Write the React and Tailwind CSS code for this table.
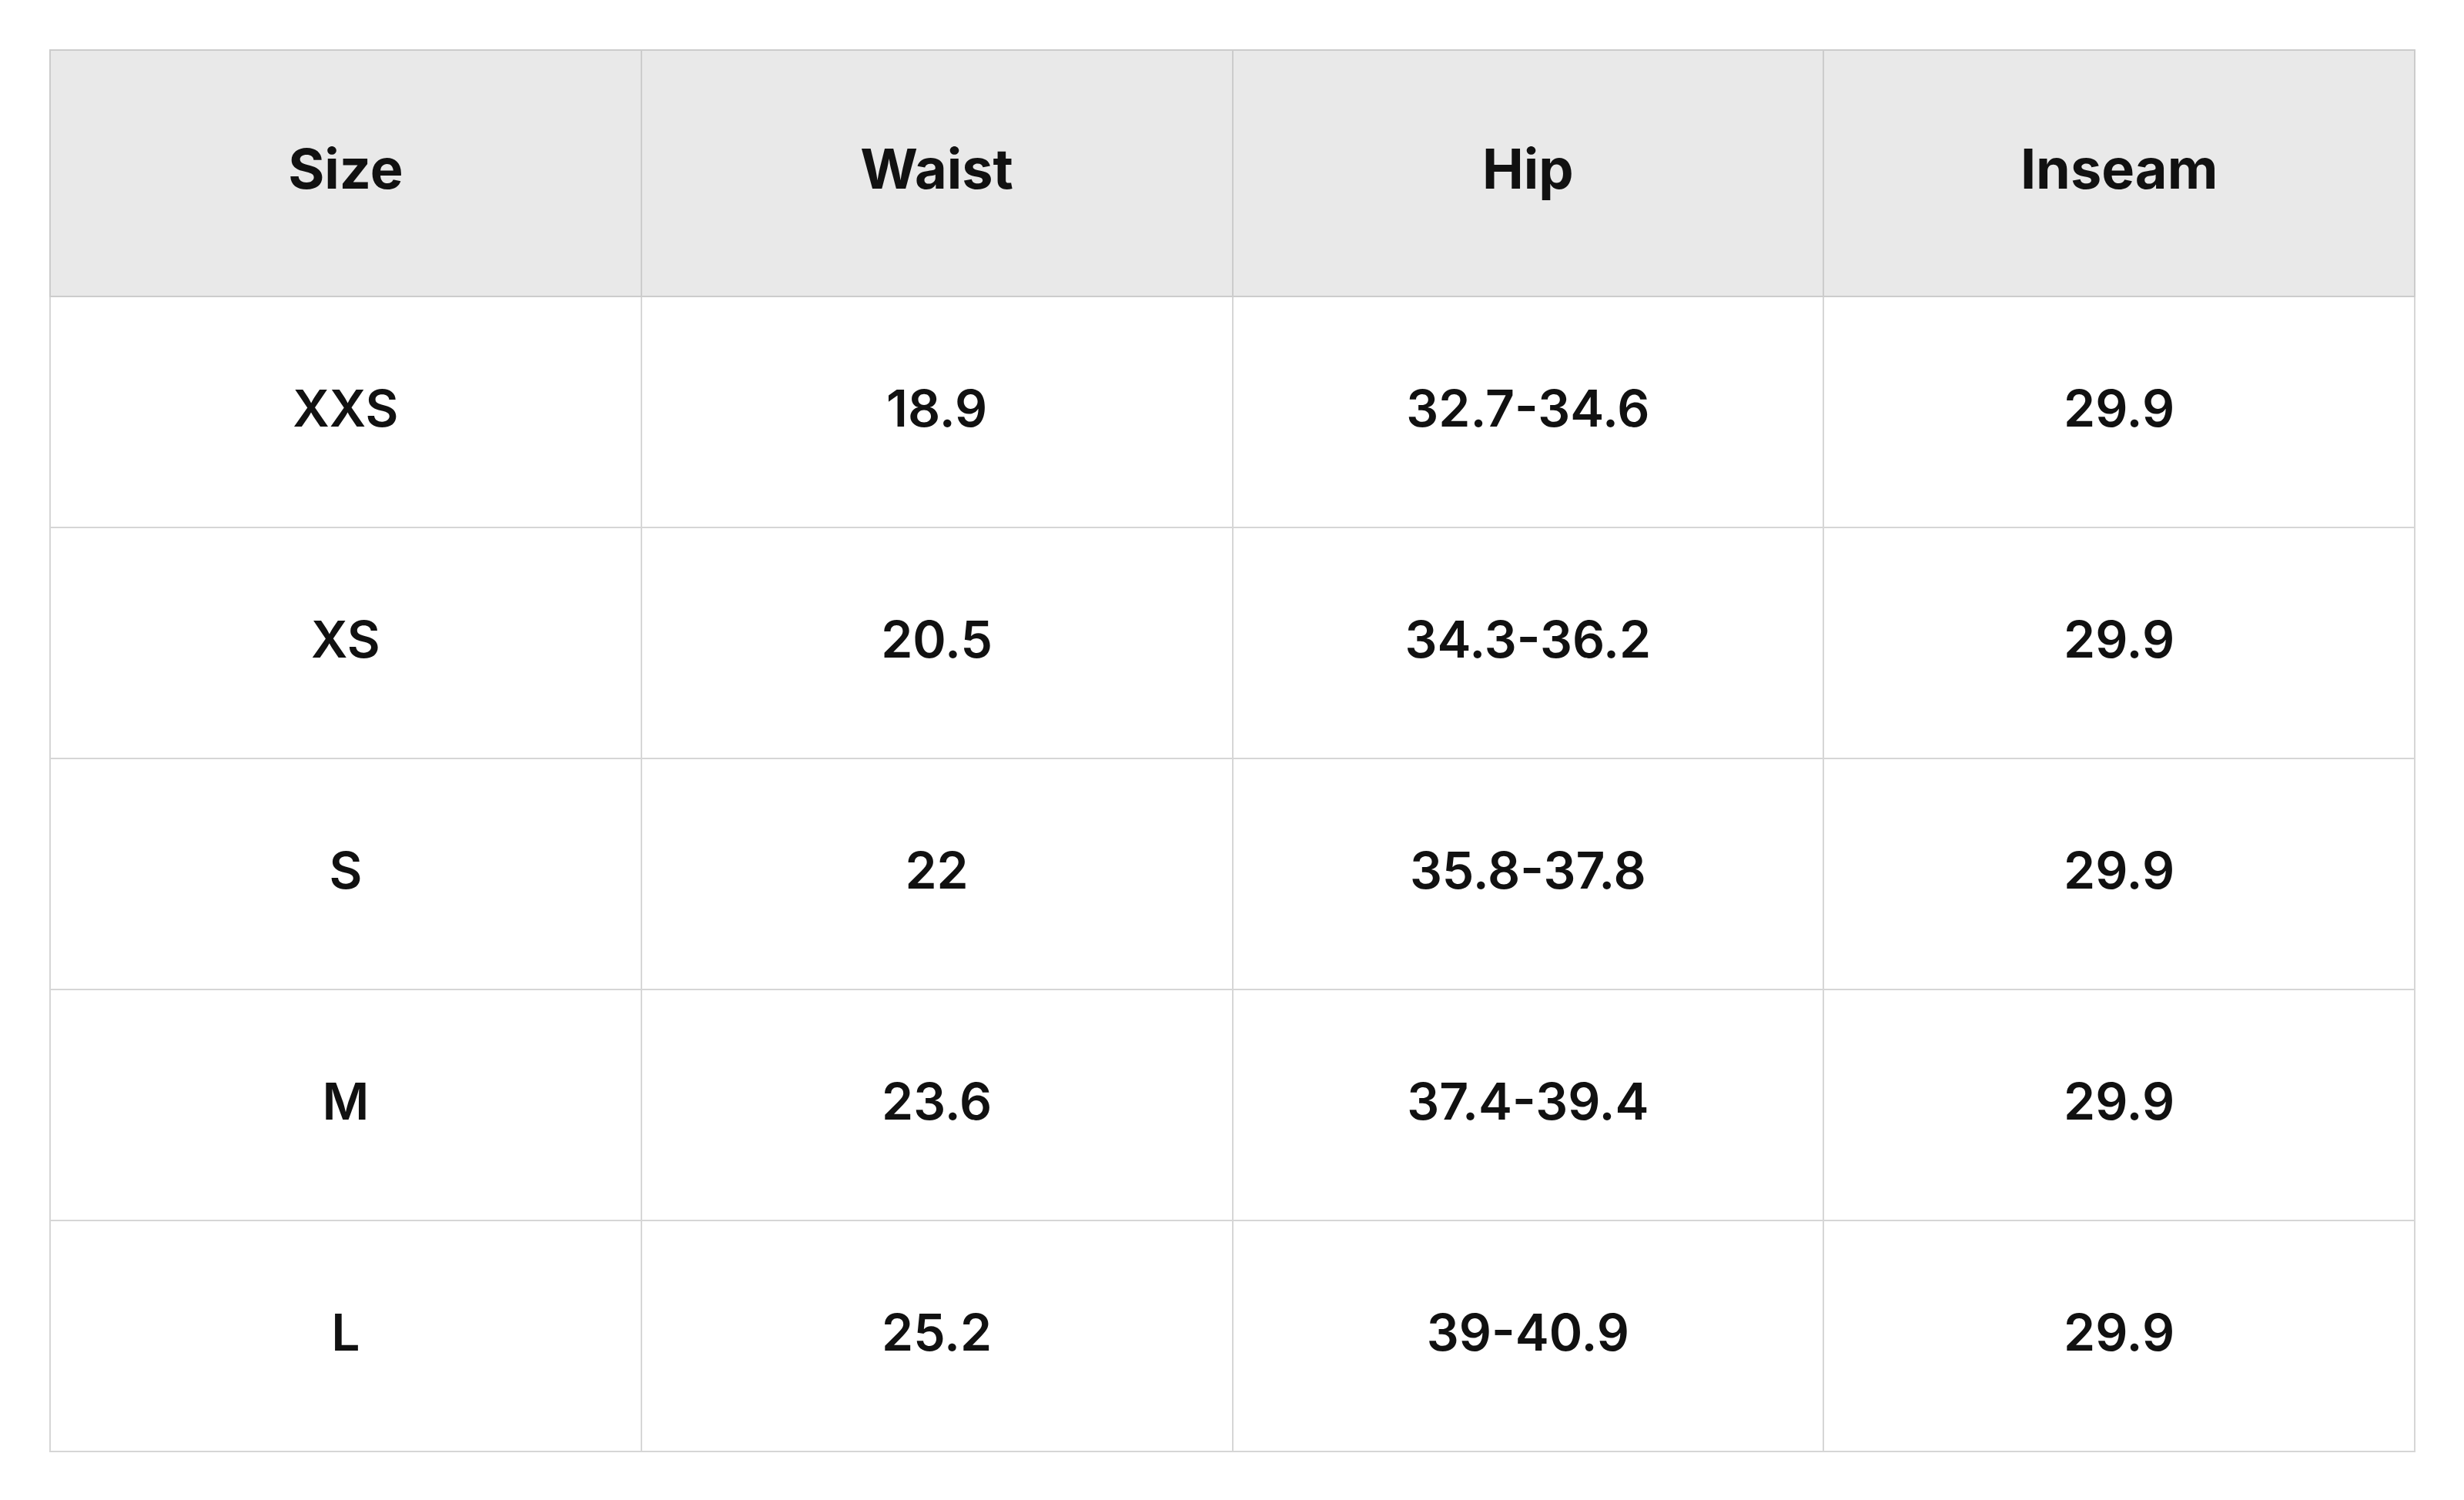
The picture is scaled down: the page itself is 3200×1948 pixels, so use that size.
import React from "react";

const headers = ["Size", "Waist", "Hip", "Inseam"];

const rows = [
    ["XXS", "18.9", "32.7-34.6", "29.9"],
    ["XS", "20.5", "34.3-36.2", "29.9"],
    ["S", "22", "35.8-37.8", "29.9"],
    ["M", "23.6", "37.4-39.4", "29.9"],
    ["L", "25.2", "39-40.9", "29.9"],
];

const App = () => {
    return (
        <div className="min-h-screen bg-white p-[64px] font-['Inter','Liberation_Sans',sans-serif] text-[#111111]">
            <table className="w-[3073px] table-fixed border-collapse">
                <thead>
                    <tr className="h-[320px] bg-[#e9e9e9]">
                        {headers.map((h) => (
                            <th
                                key={h}
                                className="border-2 border-[#cccccc] pb-[12px] text-center text-[72px] font-bold"
                            >
                                {h}
                            </th>
                        ))}
                    </tr>
                </thead>
                <tbody>
                    {rows.map((row) => (
                        <tr key={row[0]} className="h-[300px]">
                            {row.map((cell, i) => (
                                <td
                                    key={i}
                                    className="border-2 border-[#d6d6d6] pb-[10px] text-center text-[66px] font-semibold"
                                >
                                    {cell}
                                </td>
                            ))}
                        </tr>
                    ))}
                </tbody>
            </table>
        </div>
    );
};

export default App;
